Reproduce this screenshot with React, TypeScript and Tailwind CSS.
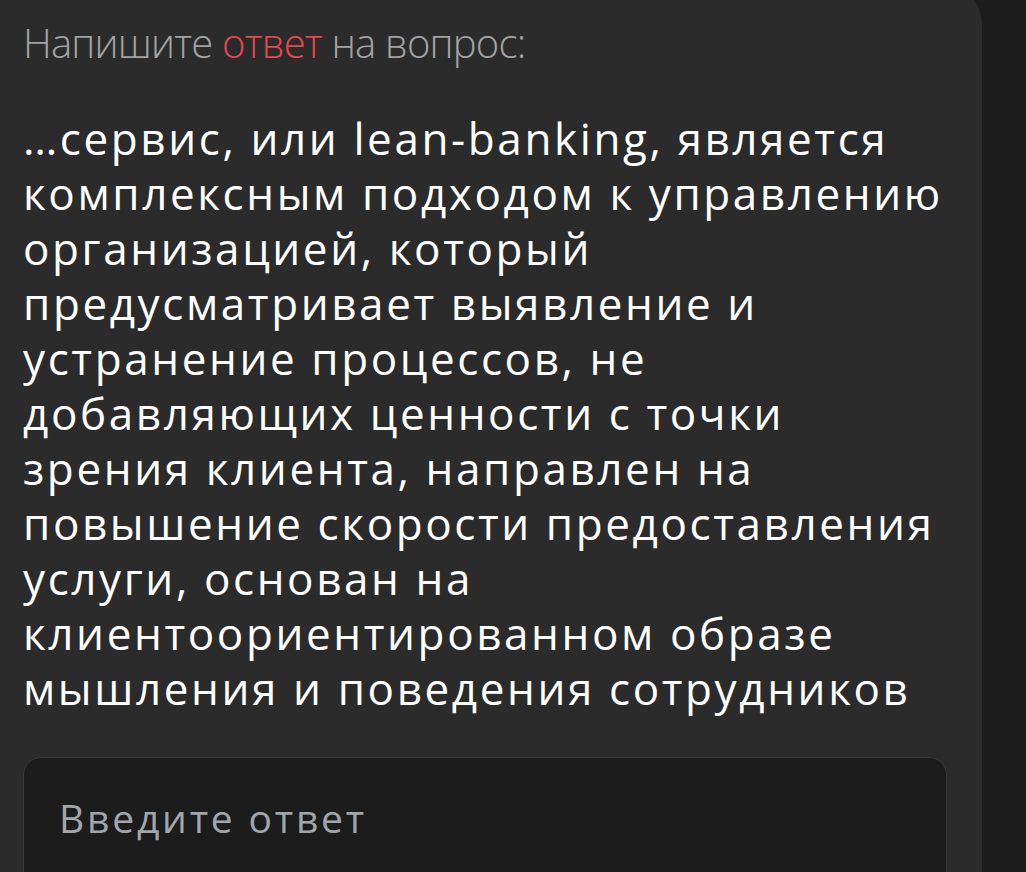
import { useState } from 'react';

const lines = [
  '…сервис, или lean-banking, является',
  'комплексным подходом к управлению',
  'организацией, который',
  'предусматривает выявление и',
  'устранение процессов, не',
  'добавляющих ценности с точки',
  'зрения клиента, направлен на',
  'повышение скорости предоставления',
  'услуги, основан на',
  'клиентоориентированном образе',
  'мышления и поведения сотрудников',
];

export default function App() {
  const [answer, setAnswer] = useState('');

  return (
    <div className="flex h-[872px] w-[1026px] overflow-hidden bg-[#1c1c1c] font-['Open_Sans',sans-serif]">
      {/* Question card */}
      <div className="-mt-[16px] flex w-[982px] shrink-0 flex-col rounded-tr-[40px] bg-[#2b2b2b] pl-[23px] pr-[35px] pt-[35px]">
        <h2 className="text-[40px] font-light leading-[48px] tracking-[-0.8px] text-[#a3a3a3]">
          Напишите <span className="text-[#e5484d]">ответ</span> на вопрос:
        </h2>

        <p className="mt-[44px] text-[44px] leading-[55px] tracking-[2.6px] text-white">
          {lines.map((line) => (
            <span key={line} className="block whitespace-nowrap">
              {line}
            </span>
          ))}
        </p>

        <textarea
          value={answer}
          onChange={(e) => setAnswer(e.target.value)}
          placeholder="Введите ответ"
          className="mt-[41px] h-[160px] w-[924px] shrink-0 resize-none rounded-[18px] border border-[#3a3a3a] bg-[#1c1c1c] px-[35px] pt-[36px] text-[39px] leading-[48px] tracking-[2.8px] text-white placeholder:text-[#a1a5ac] focus:outline-none"
        />
      </div>
    </div>
  );
}
